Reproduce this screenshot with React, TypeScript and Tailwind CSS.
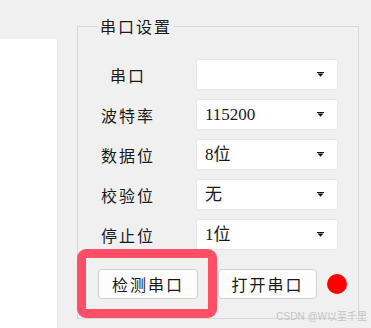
const cjk = { fontFamily: '"Noto Sans CJK SC", "Noto Sans", sans-serif' };
const serif = { fontFamily: '"Liberation Serif", "Noto Sans CJK SC", serif' };

const rows = [
  { label: "串口", value: "" },
  { label: "波特率", value: "115200" },
  { label: "数据位", value: "8位" },
  { label: "校验位", value: "无" },
  { label: "停止位", value: "1位" },
];

function Arrow() {
  return (
    <svg width="7" height="5" viewBox="0 0 7 5" className="shrink-0">
      <rect x="0" y="0" width="7" height="1" fill="#111" />
      <path d="M0.5 1.5 H6.5 L3.5 4.8 Z" fill="#111" />
    </svg>
  );
}

function Combo({ value }: { value: string }) {
  return (
    <div className="flex h-[31px] w-[142px] items-center justify-between rounded-[3px] border border-[#e8e8e8] bg-white pl-[8px] pr-[13px]">
      <span className="text-[17px] leading-none text-[#1a1a1a]" style={serif}>
        {value}
      </span>
      <Arrow />
    </div>
  );
}

export default function App() {
  return (
    <div className="relative flex h-[328px] w-[371px] overflow-hidden bg-[#f0f0f0]" style={cjk}>
      <div className="mt-[39px] h-[289px] w-[58px] border-r border-[#e4e4e4] bg-white" />

      <div className="relative ml-[19px] mt-[26px] h-[293px] w-[282px] border border-[#d9d9d9]">
        <div className="absolute left-[20px] top-[-10px] bg-[#f0f0f0] px-[2px] text-[16px] leading-[18px] tracking-[2px] text-[#1a1a1a]">
          串口设置
        </div>

        <div className="flex flex-col gap-[9px] pt-[32px]">
          {rows.map((r) => (
            <div key={r.label} className="flex items-center">
              <div className="w-[100px] text-center text-[16px] tracking-[2px] text-[#1a1a1a]">{r.label}</div>
              <div className="ml-[18px]">
                <Combo value={r.value} />
              </div>
            </div>
          ))}
        </div>

        <div className="mt-[19px] flex items-center pl-[20px]">
          <button className="h-[30px] w-[100px] rounded-[4px] border border-[#d0d0d0] bg-[#fdfdfd] text-[16px] tracking-[2px] text-[#1a1a1a]">
            检测串口
          </button>
          <button className="ml-[20px] h-[30px] w-[99px] rounded-[4px] border border-[#d0d0d0] bg-[#fdfdfd] text-[16px] tracking-[2px] text-[#1a1a1a]">
            打开串口
          </button>
          <div className="ml-[10px] h-[20px] w-[20px] rounded-full bg-[#ff0000]" />
        </div>
      </div>

      <div className="pointer-events-none absolute left-[77px] top-[249px] h-[69px] w-[140px] rounded-[9px] border-[9px] border-[#fd5066]" />

      <div className="absolute right-[4px] top-[310px] text-[10px] leading-[14px] text-[#c4c4c4]" style={{ fontFamily: '"Liberation Sans", "Noto Sans CJK SC", sans-serif' }}>
        CSDN @W以至千里
      </div>
    </div>
  );
}
